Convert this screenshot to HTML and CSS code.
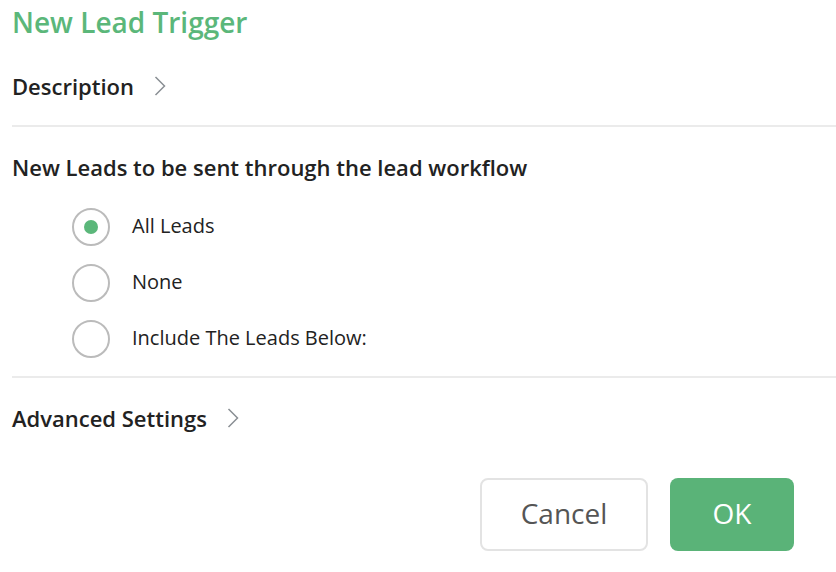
FILE: index.html
```html
<!DOCTYPE html>
<html>
<head>
<meta charset="utf-8">
<link rel="stylesheet" href="styles.css">
</head>
<body>
<div class="panel">
  <h1 class="title">New Lead Trigger</h1>
  <div class="expander">
    <span class="expander-label">Description</span>
    <svg class="chev" width="12" height="20" viewBox="0 0 12 20"><path d="M1.5 1 L10.5 10 L1.5 19" fill="none" stroke="#8a8f94" stroke-width="1.5"/></svg>
  </div>
  <hr class="divider first">
  <div class="section">
    <h2 class="section-title">New Leads to be sent through the lead workflow</h2>
    <ul class="radios">
      <li class="radio-row"><span class="radio checked"></span><span class="radio-label">All Leads</span></li>
      <li class="radio-row"><span class="radio"></span><span class="radio-label">None</span></li>
      <li class="radio-row"><span class="radio"></span><span class="radio-label">Include The Leads Below:</span></li>
    </ul>
  </div>
  <hr class="divider second">
  <div class="expander adv">
    <span class="expander-label">Advanced Settings</span>
    <svg class="chev" width="12" height="20" viewBox="0 0 12 20"><path d="M1.5 1 L10.5 10 L1.5 19" fill="none" stroke="#8a8f94" stroke-width="1.5"/></svg>
  </div>
  <div class="actions">
    <button class="btn btn-cancel">Cancel</button>
    <button class="btn btn-ok">OK</button>
  </div>
</div>
</body>
</html>
```
FILE: styles.css
```css
* { box-sizing: border-box; }
html, body { margin: 0; padding: 0; background: #fff; }
body { font-family: "Open Sans", "Noto Sans", sans-serif; color: #222; }
.panel { padding-left: 12px; }
.title { margin: 0; padding-top: 3px; font-size: 28px; font-weight: 600; color: #5bb77a; line-height: 38px; }
.expander { display: flex; align-items: center; height: 32px; margin-top: 29px; }
.expander-label { font-size: 22px; font-weight: 600; color: #222; }
.chev { margin-left: 20px; }
.divider { border: 0; border-top: 2px solid #ebebeb; margin: 0; }
.divider.first { margin-top: 23px; }
.divider.second { margin-top: 18px; }
.section { padding-top: 25px; }
.section-title { margin: 0; font-size: 22px; font-weight: 600; line-height: 30px; color: #222; }
.radios { list-style: none; margin: 26px 0 0 0; padding: 0 0 0 60px; display: flex; flex-direction: column; gap: 18px; }
.radio-row { display: flex; align-items: center; height: 38px; }
.radio { width: 38px; height: 38px; border-radius: 50%; border: 2px solid #bbbbbb; display: flex; align-items: center; justify-content: center; }
.radio.checked::after { content: ""; width: 14px; height: 14px; border-radius: 50%; background: #5bb77a; }
.radio-label { margin-left: 22px; font-size: 20px; color: #222; padding-bottom: 4px; }
.adv { margin-top: 24px; }
.actions { display: flex; justify-content: flex-end; gap: 22px; margin-top: 44px; padding-right: 42px; }
.btn { height: 73px; border-radius: 8px; font-family: "Open Sans", sans-serif; font-size: 28px; cursor: pointer; padding: 0 0 3px 0; }
.btn-cancel { width: 168px; background: #fff; border: 2px solid #e3e3e3; color: #555; }
.btn-ok { width: 124px; background: #5ab378; border: none; color: #fff; }
```
